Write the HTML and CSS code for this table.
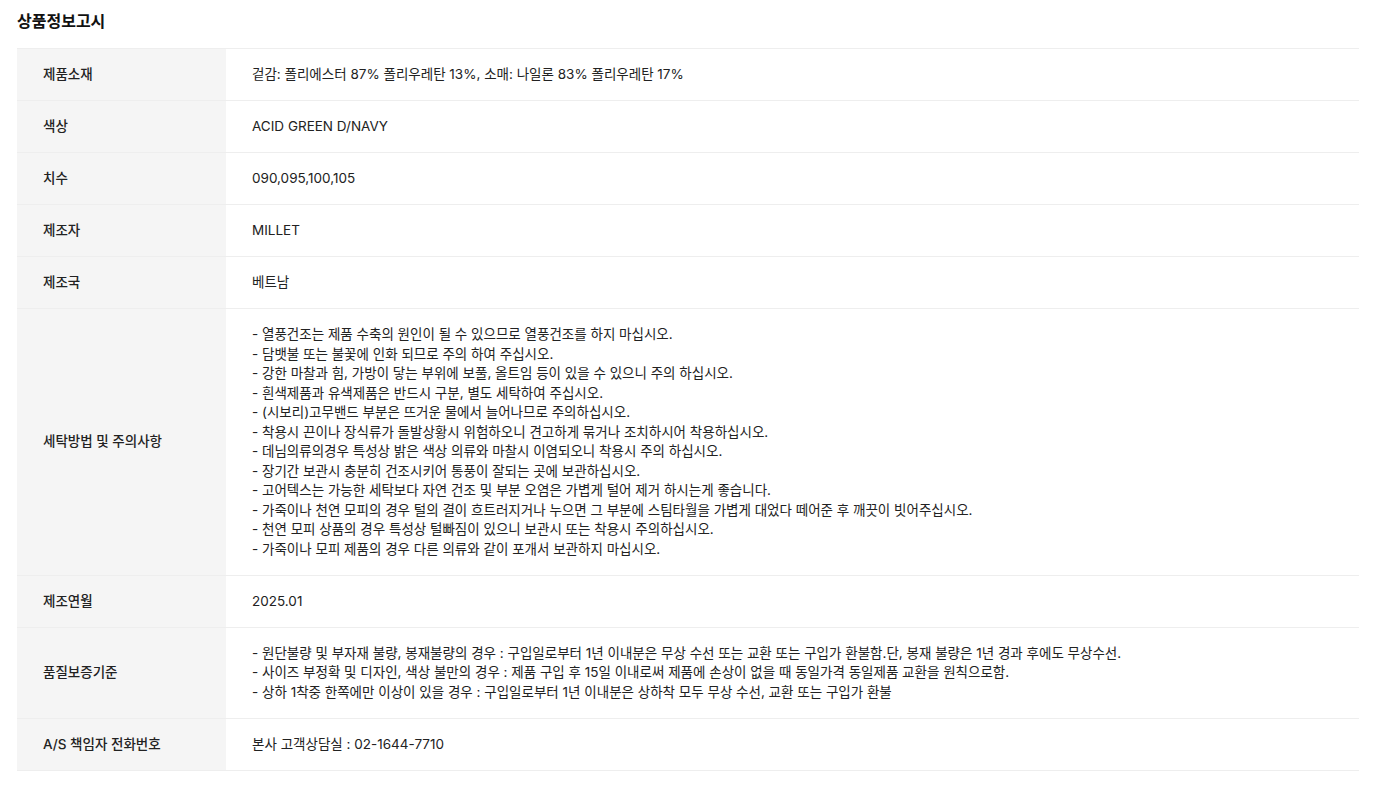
FILE: index.html
```html
<!DOCTYPE html>
<html lang="ko">
<head>
  <meta charset="UTF-8">
  <meta name="viewport" content="width=device-width, initial-scale=1.0">
  <title>상품정보고시</title>
  <link rel="stylesheet" href="styles.css">
</head>
<body>
  <div class="container">
    <h2 class="title">상품정보고시</h2>

    <table class="info-table">
      <tr>
        <th>제품소재</th>
        <td>겉감: 폴리에스터 87% 폴리우레탄 13%, 소매: 나일론 83% 폴리우레탄 17%</td>
      </tr>
      <tr>
        <th>색상</th>
        <td>ACID GREEN D/NAVY</td>
      </tr>
      <tr>
        <th>치수</th>
        <td>090,095,100,105</td>
      </tr>
      <tr>
        <th>제조자</th>
        <td>MILLET</td>
      </tr>
      <tr>
        <th>제조국</th>
        <td>베트남</td>
      </tr>
      <tr>
        <th>세탁방법 및 주의사항</th>
        <td>
          - 열풍건조는 제품 수축의 원인이 될 수 있으므로 열풍건조를 하지 마십시오.<br>
          - 담뱃불 또는 불꽃에 인화 되므로 주의 하여 주십시오.<br>
          - 강한 마찰과 힘, 가방이 닿는 부위에 보풀, 올트임 등이 있을 수 있으니 주의 하십시오.<br>
          - 흰색제품과 유색제품은 반드시 구분, 별도 세탁하여 주십시오.<br>
          - (시보리)고무밴드 부분은 뜨거운 물에서 늘어나므로 주의하십시오.<br>
          - 착용시 끈이나 장식류가 돌발상황시 위험하오니 견고하게 묶거나 조치하시어 착용하십시오.<br>
          - 데님의류의경우 특성상 밝은 색상 의류와 마찰시 이염되오니 착용시 주의 하십시오.<br>
          - 장기간 보관시 충분히 건조시키어 통풍이 잘되는 곳에 보관하십시오.<br>
          - 고어텍스는 가능한 세탁보다 자연 건조 및 부분 오염은 가볍게 털어 제거 하시는게 좋습니다.<br>
          - 가죽이나 천연 모피의 경우 털의 결이 흐트러지거나 누으면 그 부분에 스팀타월을 가볍게 대었다 떼어준 후 깨끗이 빗어주십시오.<br>
          - 천연 모피 상품의 경우 특성상 털빠짐이 있으니 보관시 또는 착용시 주의하십시오.<br>
          - 가죽이나 모피 제품의 경우 다른 의류와 같이 포개서 보관하지 마십시오.
        </td>
      </tr>
      <tr>
        <th>제조연월</th>
        <td>2025.01</td>
      </tr>
      <tr>
        <th>품질보증기준</th>
        <td>
          - 원단불량 및 부자재 불량, 봉재불량의 경우 : 구입일로부터 1년 이내분은 무상 수선 또는 교환 또는 구입가 환불함.단, 봉재 불량은 1년 경과 후에도 무상수선.<br>
          - 사이즈 부정확 및 디자인, 색상 불만의 경우 : 제품 구입 후 15일 이내로써 제품에 손상이 없을 때 동일가격 동일제품 교환을 원칙으로함.<br>
          - 상하 1착중 한쪽에만 이상이 있을 경우 : 구입일로부터 1년 이내분은 상하착 모두 무상 수선, 교환 또는 구입가 환불
        </td>
      </tr>
      <tr>
        <th>A/S 책임자 전화번호</th>
        <td>본사 고객상담실 : 02-1644-7710</td>
      </tr>
    </table>
  </div>
</body>
</html>
```

FILE: styles.css
```css
* { margin: 0; padding: 0; box-sizing: border-box; }
body {
  font-family: Inter, 'Noto Sans CJK KR', sans-serif;
  background: #fff;
  color: #222;
  padding: 10px 18px 16px 17px;
}
.title {
  font-size: 16px;
  font-weight: 700;
  line-height: 22px;
  color: #111;
  margin-bottom: 16px;
}
.info-table {
  width: 100%;
  border-collapse: collapse;
  border-top: 1px solid #eee;
  font-size: 13.5px;
  line-height: 19.5px;
}
.info-table tr {
  border-bottom: 1px solid #eee;
}
.info-table th {
  width: 209px;
  background: #f5f5f5;
  text-align: left;
  font-weight: 500;
  padding: 16px 26px 15.5px;
  vertical-align: middle;
}
.info-table td {
  padding: 16px 26px 15.5px;
  vertical-align: middle;
}
```
